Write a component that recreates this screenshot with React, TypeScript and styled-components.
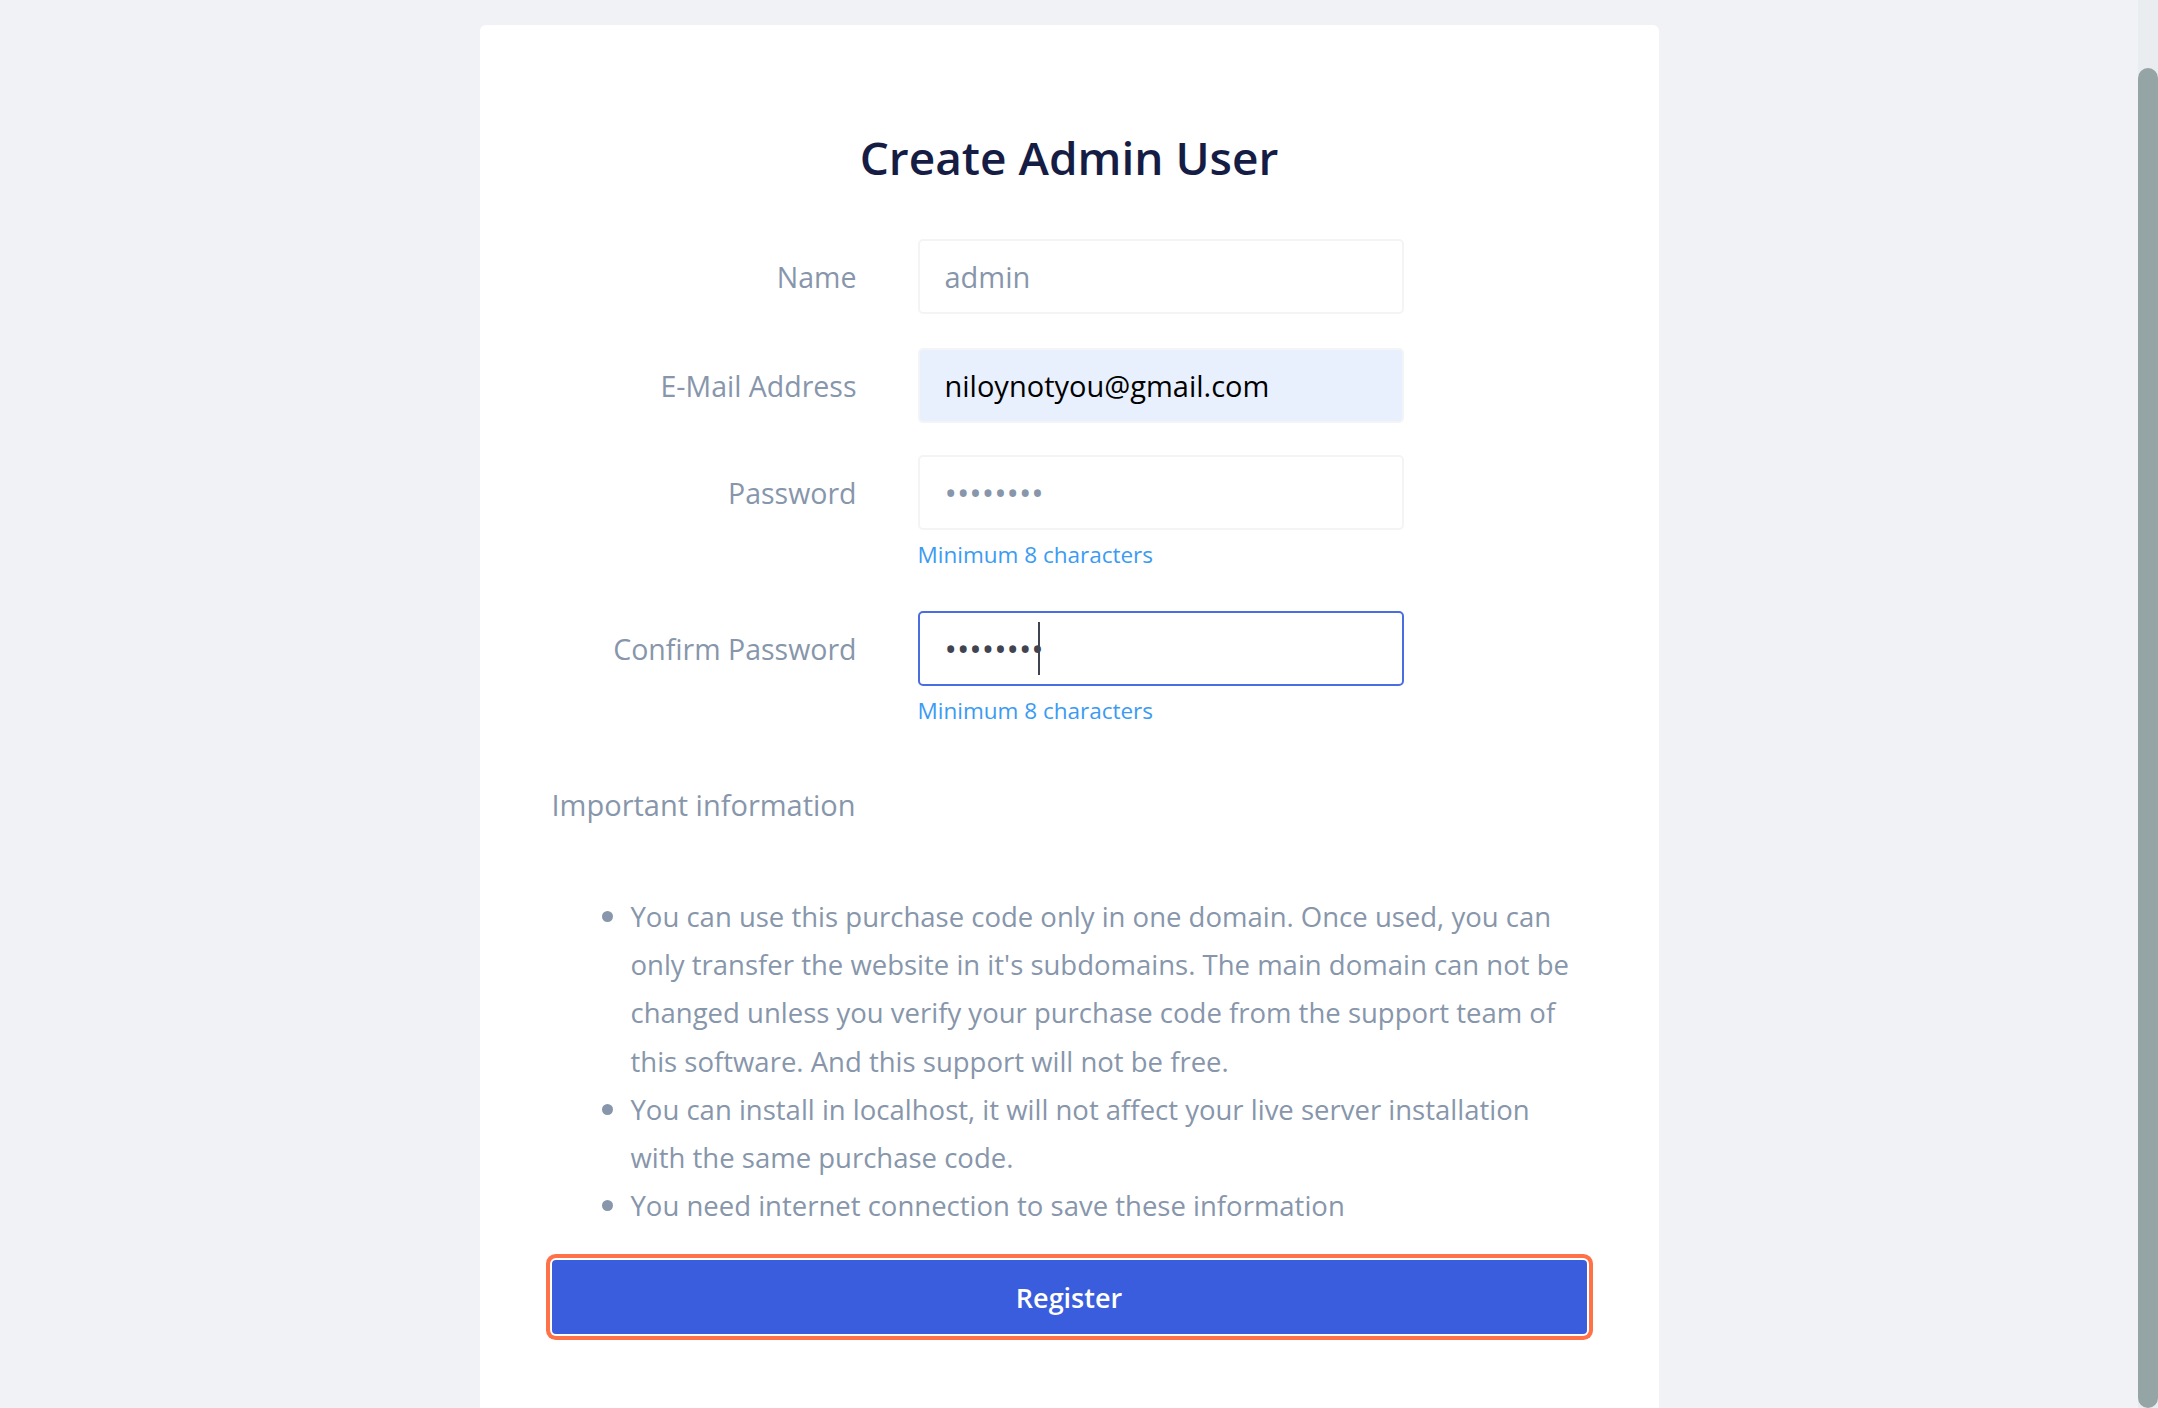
import React from "react";
import styled, { createGlobalStyle } from "styled-components";

const GlobalStyle = createGlobalStyle`
  html, body {
    margin: 0;
    padding: 0;
    height: 100%;
    overflow: hidden;
    background: #f0f2f5;
    font-family: "Open Sans", "Noto Sans", sans-serif;
  }
  * {
    box-sizing: border-box;
  }
`;

const Shell = styled.div`
  display: flex;
  height: 100vh;
  background: #f0f2f5;
`;

const Main = styled.main`
  flex: 1;
  overflow: hidden;
  padding-top: 25px;
`;

const ScrollRail = styled.div`
  width: 20px;
  display: flex;
  flex-direction: column;
  padding-top: 68px;
  background: #e9edf0;
`;

const ScrollThumb = styled.div`
  flex: 1;
  border-radius: 10px;
  background: #95a5a6;
`;

const Card = styled.div`
  width: 1179px;
  min-height: 1460px;
  margin: 0 auto;
  background: #ffffff;
  border-radius: 6px 6px 0 0;
  padding: 105px 72px 40px;
`;

const Title = styled.h1`
  margin: 0 0 54px;
  text-align: center;
  font-size: 46px;
  line-height: 55px;
  font-weight: 600;
  color: #161d45;
`;

const FormGroup = styled.div<{ gap: number }>`
  display: grid;
  grid-template-columns: 305px 486px;
  column-gap: 61px;
  align-items: center;
  margin-bottom: ${(props) => props.gap}px;
`;

const Label = styled.label`
  text-align: right;
  font-size: 28.5px;
  color: #8796ab;
`;

const InputWrap = styled.div`
  position: relative;
  width: 486px;
  height: 75px;
`;

const Input = styled.input<{ tone: string; filled?: string; focused?: string }>`
  width: 486px;
  height: 75px;
  padding: 0 25px;
  font-family: "Open Sans", "Noto Sans", sans-serif;
  font-size: ${(props) => (props.type == "password" ? "33px" : "29px")};
  color: ${(props) => props.tone};
  background: ${(props) => (props.filled == "true" ? "#e8f0fe" : "#ffffff")};
  border: 2px solid ${(props) => (props.focused == "true" ? "#4a6ee0" : "#f3f4f6")};
  border-radius: 5px;
  outline: none;
`;

const Caret = styled.span`
  position: absolute;
  left: 120px;
  top: 11px;
  width: 2px;
  height: 53px;
  background: #3f4450;
`;

const Hint = styled.div`
  grid-column: 2;
  margin: 9px 0 8px;
  font-size: 22.5px;
  line-height: 31px;
  color: #3b9bf3;
`;

const InfoTitle = styled.h4`
  margin: 50px 0 0;
  font-size: 29px;
  line-height: 42px;
  font-weight: 400;
  color: #8796ab;
`;

const InfoList = styled.ul`
  margin: 67px 0 0;
  padding-left: 79px;
  list-style: none;
  color: #8796ab;
  font-size: 27.5px;
  line-height: 48.2px;
`;

const InfoItem = styled.li`
  &::before {
    content: "";
    display: inline-block;
    width: 11px;
    height: 11px;
    margin-left: -29px;
    margin-right: 18px;
    border-radius: 50%;
    background: #8796ab;
    vertical-align: middle;
    transform: translateY(-3px);
  }
`;

const RegisterButton = styled.button`
  display: block;
  width: 100%;
  height: 74px;
  margin-top: 30px;
  border: none;
  border-radius: 4px;
  background: #3a5ddd;
  color: #ffffff;
  font-family: "Open Sans", "Noto Sans", sans-serif;
  font-size: 27px;
  font-weight: 600;
  box-shadow: 0 0 0 2px #ffffff, 0 0 0 6px #ff7146;
  cursor: pointer;
`;

export default function App() {
  return (
    <>
      <GlobalStyle />
      <Shell>
        <Main>
          <Card>
            <Title>Create Admin User</Title>

            <FormGroup gap={34}>
              <Label>Name</Label>
              <Input tone="#8796ab" defaultValue="admin" />
            </FormGroup>

            <FormGroup gap={32}>
              <Label>E-Mail Address</Label>
              <Input tone="#000000" filled="true" defaultValue="niloynotyou@gmail.com" />
            </FormGroup>

            <FormGroup gap={33}>
              <Label>Password</Label>
              <Input type="password" tone="#8796ab" defaultValue="12345678" />
              <Hint>Minimum 8 characters</Hint>
            </FormGroup>

            <FormGroup gap={0}>
              <Label>Confirm Password</Label>
              <InputWrap>
                <Input type="password" tone="#3f4450" focused="true" defaultValue="12345678" />
                <Caret />
              </InputWrap>
              <Hint>Minimum 8 characters</Hint>
            </FormGroup>

            <InfoTitle>Important information</InfoTitle>

            <InfoList>
              <InfoItem>
                You can use this purchase code only in one domain. Once used, you can only transfer
                the website in it's subdomains. The main domain can not be changed unless you verify
                your purchase code from the support team of this software. And this support will not
                be free.
              </InfoItem>
              <InfoItem>
                You can install in localhost, it will not affect your live server installation with
                the same purchase code.
              </InfoItem>
              <InfoItem>You need internet connection to save these information</InfoItem>
            </InfoList>

            <RegisterButton>Register</RegisterButton>
          </Card>
        </Main>
        <ScrollRail>
          <ScrollThumb />
        </ScrollRail>
      </Shell>
    </>
  );
}
